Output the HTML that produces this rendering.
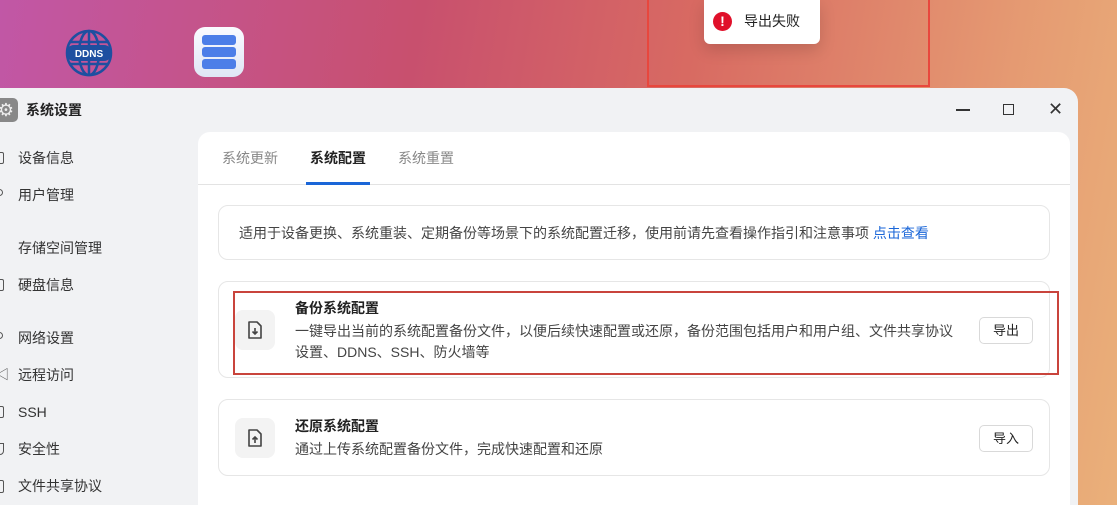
<!DOCTYPE html>
<html><head><meta charset="utf-8"><style>
*{margin:0;padding:0;box-sizing:border-box}
html,body{width:1117px;height:505px;overflow:hidden}
body{position:relative;font-family:"Liberation Sans","Noto Sans CJK SC",sans-serif;background:linear-gradient(100deg,#c157a6 0%,#c8506e 35%,#d86a62 58%,#e59a72 85%,#eab07a 100%)}
.abs{position:absolute}
.win{left:0;top:88px;width:1078px;height:430px;background:#f1f2f4;border-top-right-radius:14px}
.panel{left:198px;top:132px;width:872px;height:380px;background:#fff;border-radius:12px 12px 0 0}
.t{position:absolute;font-size:14px;color:#222;white-space:nowrap;line-height:20px}
.side{font-size:14px;color:#333}
.card{position:absolute;left:218px;width:832px;border:1px solid #e6e6e6;border-radius:10px;background:#fff}
.ic{position:absolute;width:40px;height:40px;border-radius:8px;background:#f3f3f3}
.btn{position:absolute;width:54px;height:27px;border:1px solid #d9d9d9;border-radius:5px;font-size:13px;color:#222;text-align:center;line-height:25px;background:#fff}
.si{position:absolute;left:-4px;width:8px;height:12px;border:1.5px solid #555;border-radius:2px}
</style></head><body>
<svg class="abs" style="left:64px;top:28px" width="50" height="50" viewBox="0 0 50 50"><g fill="none" stroke="#1e4fa0" stroke-width="2.5"><circle cx="25" cy="25" r="22"/><ellipse cx="25" cy="25" rx="10" ry="22"/><line x1="25" y1="3" x2="25" y2="47"/><line x1="5" y1="14" x2="45" y2="14"/><line x1="5" y1="36" x2="45" y2="36"/></g><rect x="2" y="17" width="46" height="16" rx="8" fill="#1e4fa0"/><text x="25" y="29" font-size="10" font-weight="bold" fill="#fff" text-anchor="middle" font-family="Liberation Sans">DDNS</text></svg>
<div class="abs" style="left:194px;top:27px;width:50px;height:50px;border-radius:11px;background:linear-gradient(#fafbff,#dfe6f5)"></div>
<div class="abs" style="left:202px;top:35px;width:34px;height:10px;border-radius:3px;background:#4c7ee8"></div>
<div class="abs" style="left:202px;top:47px;width:34px;height:10px;border-radius:3px;background:#4c7ee8"></div>
<div class="abs" style="left:202px;top:59px;width:34px;height:10px;border-radius:3px;background:#4c7ee8"></div>
<div class="abs" style="left:647px;top:-3px;width:283px;height:90px;border:2px solid #e8473d"></div>
<div class="abs" style="left:704px;top:0;width:116px;height:44px;background:#fff;border-radius:0 0 6px 6px;box-shadow:0 6px 16px rgba(0,0,0,.15)"></div>
<div class="abs" style="left:713px;top:12px;width:19px;height:19px;border-radius:50%;background:#e0102a;color:#fff;font-size:14px;font-weight:bold;text-align:center;line-height:19px">!</div>
<div class="t" style="left:744px;top:11px;font-size:14px">导出失败</div>
<div class="abs win"></div>
<div class="abs" style="left:-6px;top:98px;width:24px;height:24px;border-radius:5px;background:#888;color:#eee;font-size:18px;line-height:24px;text-align:center">⚙</div>
<div class="t" style="left:26px;top:100px;font-weight:bold">系统设置</div>
<div class="abs" style="left:956px;top:109px;width:14px;height:2px;background:#333"></div>
<div class="abs" style="left:1003px;top:104px;width:11px;height:11px;border:1.5px solid #333"></div>
<div class="t" style="left:1048px;top:99px;font-size:18px;color:#333">✕</div>
<div class="t side" style="left:18px;top:148px">设备信息</div>
<div class="t side" style="left:18px;top:185px">用户管理</div>
<div class="t side" style="left:18px;top:238px">存储空间管理</div>
<div class="t side" style="left:18px;top:275px">硬盘信息</div>
<div class="t side" style="left:18px;top:328px">网络设置</div>
<div class="t side" style="left:18px;top:365px">远程访问</div>
<div class="t side" style="left:18px;top:402px">SSH</div>
<div class="t side" style="left:18px;top:439px">安全性</div>
<div class="t side" style="left:18px;top:476px">文件共享协议</div>
<div class="si" style="top:152px"></div>
<div class="si" style="top:189px;border-radius:50%;width:7px;height:7px"></div>
<div class="si" style="top:279px"></div>
<div class="si" style="top:332px;border-radius:50%;width:7px;height:7px"></div>
<div class="si" style="top:369px;border:none;font-size:13px;color:#555;width:10px;height:14px;line-height:12px">◁</div>
<div class="si" style="top:406px"></div>
<div class="si" style="top:443px;border-radius:0 0 6px 6px"></div>
<div class="si" style="top:480px;height:13px"></div>
<div class="abs panel"></div>
<div class="t" style="left:222px;top:148px;color:#888">系统更新</div>
<div class="t" style="left:310px;top:148px;font-weight:bold">系统配置</div>
<div class="t" style="left:398px;top:148px;color:#888">系统重置</div>
<div class="abs" style="left:198px;top:184px;width:872px;height:1px;background:#e3e3e3"></div>
<div class="abs" style="left:306px;top:182px;width:64px;height:3px;background:#1a66d8"></div>
<div class="card" style="top:205px;height:55px"></div>
<div class="t" style="left:239px;top:223px;font-size:14px;color:#444">适用于设备更换、系统重装、定期备份等场景下的系统配置迁移，使用前请先查看操作指引和注意事项 <span style="color:#1a66d8">点击查看</span></div>
<div class="card" style="top:281px;height:97px"></div>
<div class="ic" style="left:235px;top:310px"></div>
<svg class="abs" style="left:246px;top:320px" width="18" height="20" viewBox="0 0 18 20"><path d="M3 2h8l4 4v12H3z" fill="none" stroke="#444" stroke-width="1.6" stroke-linejoin="round"/><path d="M9 8v6M6.5 11.5L9 14l2.5-2.5" fill="none" stroke="#444" stroke-width="1.6"/></svg>
<div class="t" style="left:295px;top:298px;font-weight:bold">备份系统配置</div>
<div class="t" style="left:295px;top:321px;font-size:14px;color:#444;line-height:21px">一键导出当前的系统配置备份文件，以便后续快速配置或还原，备份范围包括用户和用户组、文件共享协议<br>设置、DDNS、SSH、防火墙等</div>
<div class="btn" style="left:979px;top:317px">导出</div>
<div class="abs" style="left:233px;top:291px;width:826px;height:84px;border:2px solid #c9443c"></div>
<div class="card" style="top:399px;height:77px"></div>
<div class="ic" style="left:235px;top:418px"></div>
<svg class="abs" style="left:246px;top:428px" width="18" height="20" viewBox="0 0 18 20"><path d="M3 2h8l4 4v12H3z" fill="none" stroke="#444" stroke-width="1.6" stroke-linejoin="round"/><path d="M9 15V9M6.5 11.5L9 9l2.5 2.5" fill="none" stroke="#444" stroke-width="1.6"/></svg>
<div class="t" style="left:295px;top:416px;font-weight:bold">还原系统配置</div>
<div class="t" style="left:295px;top:439px;font-size:14px;color:#444">通过上传系统配置备份文件，完成快速配置和还原</div>
<div class="btn" style="left:979px;top:425px">导入</div>
</body></html>
